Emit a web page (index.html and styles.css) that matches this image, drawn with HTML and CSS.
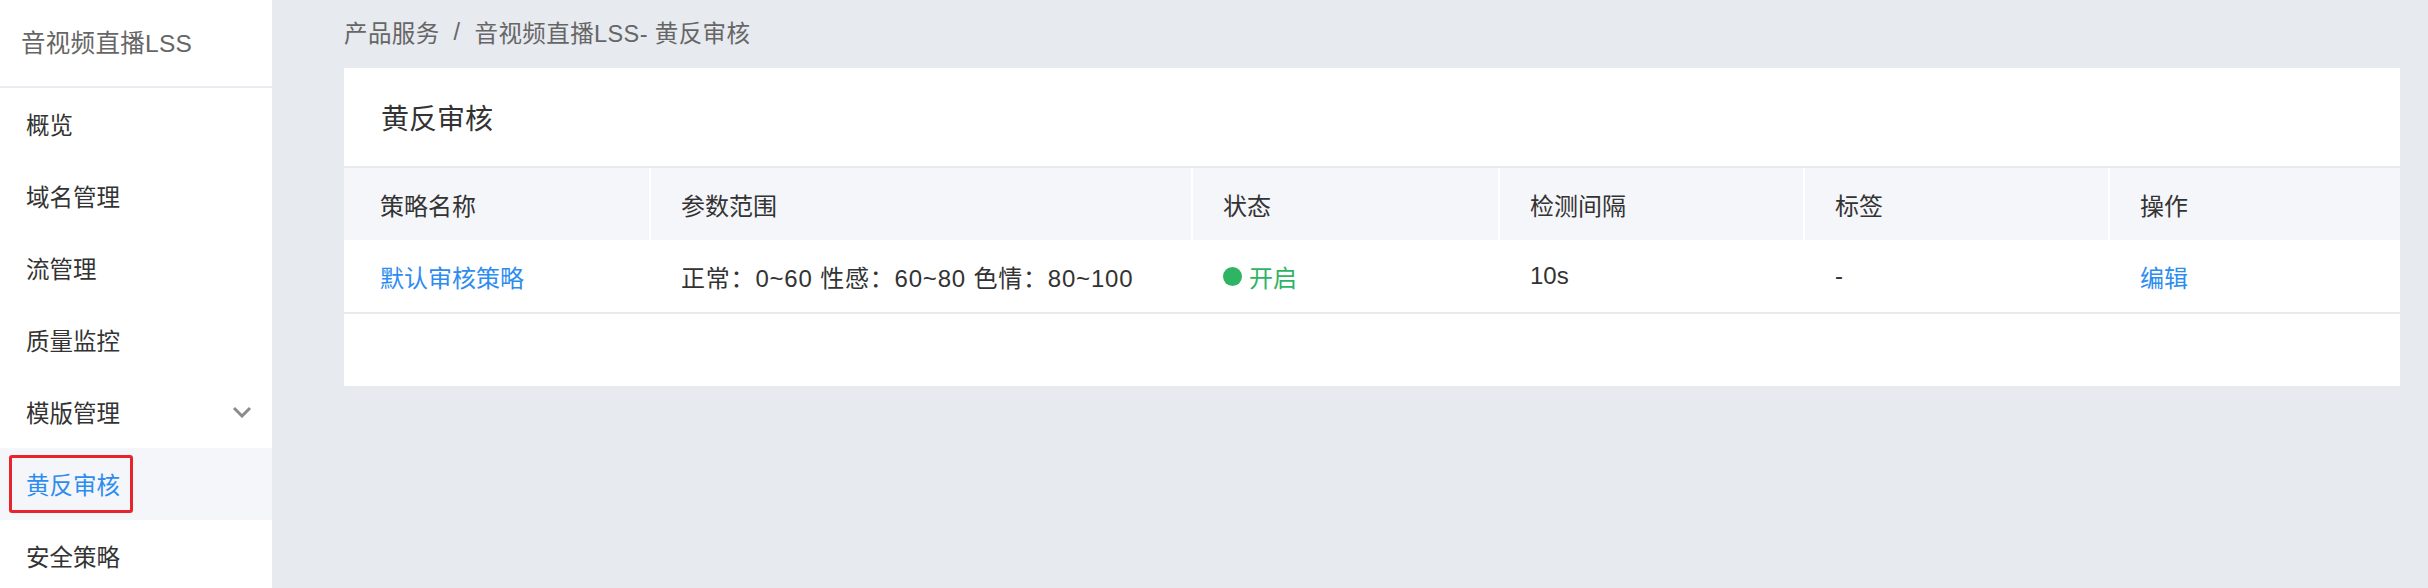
FILE: index.html
```html
<!DOCTYPE html>
<html lang="zh-CN">
<head>
<meta charset="utf-8">
<title>黄反审核</title>
<link rel="stylesheet" href="styles.css">
</head>
<body>
<div class="layout">
  <aside class="sidebar">
    <div class="sidebar-title">音视频直播LSS</div>
    <nav class="menu">
      <div class="menu-item">概览</div>
      <div class="menu-item">域名管理</div>
      <div class="menu-item">流管理</div>
      <div class="menu-item">质量监控</div>
      <div class="menu-item has-sub">模版管理
        <svg class="chevron" width="20" height="12" viewBox="0 0 20 12"><path d="M2 2 L10 10 L18 2" fill="none" stroke="#8c8c8c" stroke-width="3"/></svg>
      </div>
      <div class="menu-item active">黄反审核<span class="mark"></span></div>
      <div class="menu-item">安全策略</div>
    </nav>
  </aside>
  <main class="main">
    <div class="breadcrumb">产品服务<span class="sep">/</span>音视频直播LSS- 黄反审核</div>
    <section class="card">
      <div class="card-head">黄反审核</div>
      <div class="table">
        <div class="row head">
          <div class="cell first">策略名称</div>
          <div class="cell">参数范围</div>
          <div class="cell">状态</div>
          <div class="cell">检测间隔</div>
          <div class="cell">标签</div>
          <div class="cell">操作</div>
        </div>
        <div class="row body">
          <div class="cell first link">默认审核策略</div>
          <div class="cell range">正常：0~60 性感：60~80 色情：80~100</div>
          <div class="cell status"><span class="dot"></span>开启</div>
          <div class="cell">10s</div>
          <div class="cell">-</div>
          <div class="cell link">编辑</div>
        </div>
      </div>
      <div class="card-foot"></div>
    </section>
  </main>
</div>
</body>
</html>
```

FILE: styles.css
```css
* { box-sizing: border-box; }
html, body { margin: 0; padding: 0; }
body {
  font-family: "Liberation Sans", "Noto Sans CJK SC", sans-serif;
  color: #333;
  background: #e7eaef;
  width: 2428px;
  height: 588px;
  overflow: hidden;
}
.layout { display: flex; height: 588px; }
.sidebar {
  width: 272px;
  flex: none;
  background: #fff;
}
.sidebar-title {
  height: 88px;
  border-bottom: 2px solid #e8ecf0;
  padding-left: 21px;
  display: flex;
  align-items: center;
  font-size: 24.5px;
  letter-spacing: 0.3px;
  color: #666;
  padding-bottom: 4px;
}
.menu { display: flex; flex-direction: column; }
.menu-item {
  position: relative;
  height: 72px;
  display: flex;
  align-items: center;
  padding-left: 26px;
  padding-right: 20px;
  font-size: 23.5px;
  color: #333;
}
.menu-item.has-sub { justify-content: space-between; }
.chevron { display: block; }
.menu-item.active { background: #f5f6fa; color: #2d8cf0; }
.mark {
  position: absolute;
  left: 9px;
  top: 7px;
  width: 124px;
  height: 58px;
  border: 3px solid #e8232b;
  border-radius: 3px;
}
.main {
  flex: 1;
  padding: 0 28px 0 72px;
  display: flex;
  flex-direction: column;
}
.breadcrumb {
  height: 68px;
  display: flex;
  align-items: center;
  font-size: 23.5px;
  letter-spacing: 0.4px;
  color: #666;
  padding-bottom: 4px;
}
.sep { margin: 0 14px; }
.card { background: #fff; }
.card-head {
  height: 100px;
  border-bottom: 2px solid #e8eaee;
  padding-left: 37px;
  display: flex;
  align-items: center;
  font-size: 28px;
  color: #333;
}
.row {
  display: grid;
  grid-template-columns: 305px 542px 307px 305px 305px 1fr;
  height: 72px;
}
.row.head { background: #f5f6fa; }
.row.body { height: 74px; border-bottom: 2px solid #e8eaee; }
.cell {
  display: flex;
  align-items: center;
  padding-left: 30px;
  font-size: 24px;
  color: #333;
}
.row.head .cell + .cell { border-left: 2px solid #fff; padding-left: 30px; }
.row.body .cell + .cell { padding-left: 32px; }
.cell.first { padding-left: 36px; }
.cell.range { letter-spacing: 0.8px; }
.link { color: #2d8cf0; }
.status { color: #2fb464; }
.dot {
  width: 19px;
  height: 19px;
  border-radius: 50%;
  background: #2fb464;
  margin-right: 7px;
}
.card-foot { height: 72px; }
```
